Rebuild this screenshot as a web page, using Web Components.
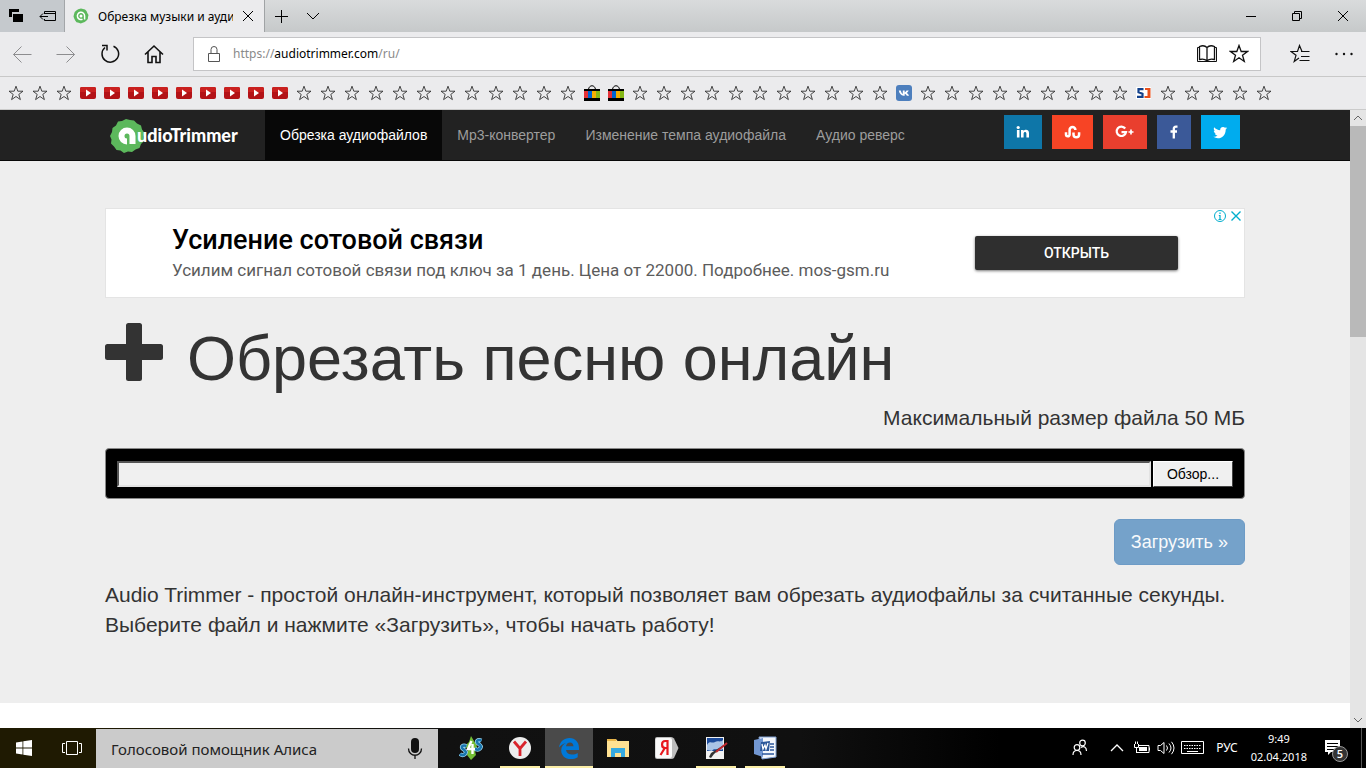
<!DOCTYPE html>
<html lang="ru">
<head>
<meta charset="utf-8">
<meta name="viewport" content="width=device-width, initial-scale=1">
<title>Обрезка музыки и аудиофайлов онлайн</title>
<style>
  body { margin: 0; font-family: "Noto Sans", "Open Sans", sans-serif; font-size: 12px; color: #000; }
</style>
</head>
<body>
<desktop-screen></desktop-screen>
<script>
const define = (name, html, setup) => {
  const tpl = document.createElement('template');
  tpl.innerHTML = html;
  customElements.define(name, class extends HTMLElement {
    connectedCallback() {
      if (this.shadowRoot) return;
      const root = this.attachShadow({ mode: 'open' });
      root.appendChild(tpl.content.cloneNode(true));
      if (setup) setup(root, this);
    }
  });
};

/* Icon set: [width, height, markup] */
const STAR = 'M8 1.2 9.8 6.2H15L10.8 9.4 12.4 14.6 8 11.5 3.6 14.6 5.2 9.4 1 6.2H6.2Z';
const ICONS = {
  tabs: [16, 16, '<path d="M1 1h10v3H4v5H1z" fill="currentColor"/><path d="M5 6h10v8H5z" fill="currentColor"/>'],
  aside: [18, 14, '<g fill="none" stroke="currentColor"><path d="M5.5 5V2.500h11v9h-11V10M5.500 4.500h11M1 7.500h8M4 4.500l-3 3 3 3"/></g>'],
  fav: [16, 16, '<path d="M8 .5l2 .6 2 .4 1.500 1.500.8 2 1.200 2-.5 2-.2 2-1.500 1.700-1.600 1.300-2 .8-2 .7-2-.7-2.200-.6-1.300-1.700L1.200 10.500.5 8.500 1 6.200 1.700 4l1.600-1.500 1.900-1.200z" fill="#5cb85c"/><path d="M9.500 11.200A3.600 3.600 0 1 1 11.600 8v3.500" fill="none" stroke="#fff" stroke-width="1.500"/><circle cx="8" cy="8" r="1.500" fill="#fff"/>'],
  close: [12, 12, '<path d="M1 1l10 10M11 1L1 11" stroke="currentColor" fill="none"/>'],
  plus: [14, 14, '<path d="M7.500 1v13M1 7.500h13" stroke="currentColor" fill="none"/>'],
  down: [14, 8, '<path d="M1 1l6 6 6-6" stroke="currentColor" fill="none"/>'],
  up: [14, 8, '<path d="M1 7l6-6 6 6" stroke="currentColor" fill="none" stroke-width="1.300"/>'],
  min: [12, 12, '<path d="M1 6.500h10" stroke="currentColor"/>'],
  restore: [12, 12, '<path d="M1.500 3.500h7v7h-7zM3.500 3V1.500h7v7H9" stroke="currentColor" fill="none"/>'],
  back: [20, 20, '<path d="M19.500 10.500H1.500M9.500 2.500l-8 8 8 8" stroke="currentColor" fill="none"/>'],
  forward: [20, 20, '<path d="M.5 10.500h18M10.500 2.500l8 8-8 8" stroke="currentColor" fill="none"/>'],
  refresh: [20, 20, '<path d="M13.500 2.200A8.300 8.300 0 1 1 5 3.500" stroke="currentColor" stroke-width="1.500" fill="none"/><path d="M2 1.500h5v5" stroke="currentColor" stroke-width="1.500" fill="none"/>'],
  home: [20, 20, '<path d="M1 10.500l9-8.500 9 8.500M4 8v10.500h4v-6h4v6h4V8" stroke="currentColor" stroke-width="1.600" fill="none"/>'],
  lock: [14, 18, '<path d="M1.500 8.500h11v8h-11zM4 8V4.500a3 3 0 0 1 6 0V8" stroke="currentColor" fill="none"/>'],
  book: [20, 20, '<path d="M10 3.500C8 1.500 5 1.500 2.500 2.500v13C5 14.800 8 15 10 16.800c2-1.800 5-2 7.500-1.300v-13C15 1.500 12 1.500 10 3.500zM10 3.500v13" stroke="currentColor" stroke-width="1.300" fill="none"/><path d="M2 3.500H.5v14h19v-14H18" stroke="currentColor" fill="none"/>'],
  star: [20, 20, '<path d="M10 1.500l2.200 6h6.300l-5 3.800 1.800 6.200-5.300-3.700-5.300 3.700 1.800-6.200-5-3.800h6.300z" stroke="currentColor" stroke-width="1.300" fill="none"/>'],
  hub: [20, 20, '<path d="M12 7.500L9.500 1.500l-2 6h-6.500l5 3.800-1.800 6.200 4.800-3.400M11 7.500h8.500M11 12.500h8.500M9.500 16.500h10" stroke="currentColor" stroke-width="1.200" fill="none"/>'],
  dots: [20, 20, '<g fill="currentColor"><circle cx="2.500" cy="10" r="1.200"/><circle cx="10" cy="10" r="1.200"/><circle cx="17.500" cy="10" r="1.200"/></g>'],
  bstar: [16, 16, `<path d="${STAR}" fill="none" stroke="currentColor" stroke-width=".9"/>`],
  tube: [16, 12, '<rect width="16" height="12" rx="2" fill="#b31217"/><path d="M1.500 0h13a1.500 1.500 0 0 1 1.500 1.500V5H0V1.500A1.500 1.500 0 0 1 1.500 0z" fill="#c9201f"/><path d="M6 2.500l5 3.500-5 3.500z" fill="#fff"/>'],
  bag: [16, 16, '<path d="M4.500 4.500C5-.500 11-.500 11.500 4.500" fill="none" stroke="#000"/><path d="M0 4h16v12H0z" fill="#000"/><path d="M0 6h4v7H0z" fill="#e53238"/><path d="M4 6h4v7H4z" fill="#0064d2"/><path d="M8 6h4v7H8z" fill="#f5af02"/><path d="M12 6h4v7h-4z" fill="#86b817"/>'],
  vk: [16, 16, '<rect width="16" height="16" rx="3" fill="#4d7fbd"/><path d="M2.800 5.500h2C5.200 7.200 6 8.500 6.800 9V5.500h1.900v2C9.500 7 10.200 6 10.500 5.500h2.200C12.300 6.700 11.300 7.600 10.800 8c.8.500 1.700 1.400 2.200 2.700h-2.200C10.400 9.900 9.500 9 8.700 8.800v1.900H7.500C5 10.500 3.200 8.400 2.800 5.500z" fill="#fff"/>'],
  sj: [16, 16, '<path d="M0 2h15v12H0z" fill="#fff"/><path d="M7.500 4.200H2.500v3l4 1.600v3H1" fill="none" stroke="#12418c" stroke-width="2.200"/><path d="M9 3h5.500v10H8.500v-2h3V5H9z" fill="#e8501c"/>'],
  cross: [64, 64, '<path d="M23.500 1h11q2.500 0 2.500 2.500V22h18.500q2.500 0 2.500 2.500v11q0 2.500-2.500 2.500H37v18.500q0 2.500-2.500 2.500h-11q-2.500 0-2.500-2.500V38H2.500Q0 38 0 35.500v-11Q0 22 2.500 22H21V3.500Q21 1 23.500 1z" fill="currentColor"/>'],
  linkedin: [14, 14, '<g fill="currentColor"><circle cx="2.200" cy="2.500" r="1.600"/><path d="M.9 5h2.600v7.500H.9zM5 5h2.500v1.100C8.800 4.200 13 4.200 13 8v4.500h-2.600V8.500c0-2.200-2.800-2-2.800 0v4H5z"/></g>'],
  stumble: [17, 14, '<path d="M2 7.200v2.300a1.800 1.800 0 0 0 3.600 0V5a2.900 2.900 0 0 1 5.800 0M9.500 7.500v2a2.800 2.800 0 0 0 5.600 0V7.200" fill="none" stroke="currentColor" stroke-width="2.500"/>'],
  gplus: [20, 14, '<path d="M10.200 3.500A4.700 4.700 0 1 0 11 7.200H6.500" fill="none" stroke="currentColor" stroke-width="2.200"/><path d="M16 4.500v5M13.500 7h5" stroke="currentColor" stroke-width="1.700"/>'],
  facebook: [10, 14, '<path d="M8.500 1.600H7C5.300 1.600 4.800 2.500 4.800 4v9.500M1.500 6.500h6.500" fill="none" stroke="currentColor" stroke-width="2.300"/>'],
  twitter: [15, 14, '<path d="M14.200 3c-.5.300-1 .4-1.600.5.600-.4 1-.9 1.200-1.500-.5.300-1.100.5-1.800.7A2.900 2.900 0 0 0 7.200 5.300C4.800 5.200 2.700 4 1.200 2.300c-.8 1.400-.3 3 .9 3.900-.5 0-.9-.2-1.300-.4 0 1.400 1 2.500 2.300 2.800-.4.100-.9.100-1.300 0 .4 1.200 1.400 2 2.700 2-1.200.9-2.700 1.400-4.200 1.200 5.700 3.600 12.500-.1 12.400-7.300.6-.4 1.100-.9 1.500-1.500z" fill="currentColor"/>'],
  info: [14, 14, '<circle cx="7" cy="7" r="5.500" fill="none" stroke="currentColor"/><path d="M7 6v4.500M7 3.500V5M5.800 6.500H7M5.500 10.500h3" stroke="currentColor" stroke-width="1.200"/>'],
  adclose: [12, 14, '<path d="M1.500 2.500l9 9M10.500 2.500l-9 9" stroke="currentColor" stroke-width="1.400"/>'],
  win: [16, 16, '<path d="M0 2.500l6.500-1V7.500H0zM7.300 1.300L16 0v7.500H7.300zM0 8.400h6.500v6L0 13.500zM7.300 8.400H16V16l-8.700-1.300z" fill="currentColor"/>'],
  task: [20, 16, '<path d="M4.500 1.500h11v13h-11zM3 3.500H.5v9H3M17 3.500h2.500v9H17" fill="none" stroke="currentColor"/>'],
  mic: [16, 22, '<rect x="4" y="0" width="8" height="15" rx="4" fill="currentColor"/><path d="M1.500 10.500c0 9 13 9 13 0M8 17.500V21" fill="none" stroke="currentColor" stroke-width="1.300"/>'],
  s4s: [24, 24, '<path d="M12 0l3 5 3 5-2 5 1 4-5 5-4-5 1-5-3-4 4-4z" fill="#73bd35"/><g fill="none"><path d="M7.500 10c-4-1.500-6 1-3.500 3s4 3 2 5-4 1-5 0M22.500 4.500c-4-1.500-6 1-3.500 3s4 3 2 5-4 1-5 0" stroke="#9edaf5" stroke-width="4"/><path d="M7.500 10c-4-1.500-6 1-3.500 3s4 3 2 5-4 1-5 0M22.500 4.500c-4-1.500-6 1-3.500 3s4 3 2 5-4 1-5 0" stroke="#1976ae" stroke-width="2.500"/><path d="M12.500 5L9 13h7M13.500 8v10" stroke="#fff" stroke-width="2.400"/></g>'],
  ybrowser: [24, 24, '<circle cx="12" cy="12" r="11" fill="#ededed"/><path d="M6 5.500l6 7 6-7M12 12v8" fill="none" stroke="#d9232b" stroke-width="2.800"/>'],
  edge: [24, 24, '<path d="M2 11.500C3 5.500 7 2 12.500 2 18.500 2 22 6.500 22 12v2H9c.4 3 3 4.500 6 4.500 2.200 0 4-.5 5.700-1.600v4.300C18.700 22.500 16.500 23 14 23c-6 0-9.800-3.500-9.800-8.800 0-3.500 2-6 5-7.500C6.500 7.300 4 9 2 11.500zM9 10.200h7.500C16.400 8 15 6.500 13 6.500c-2.200 0-3.600 1.600-4 3.700z" fill="#0078d7" fill-rule="evenodd"/>'],
  folder: [24, 24, '<path d="M1 3h9l1.500 2H23v16H1z" fill="#ffe192"/><path d="M1 3h9v2H1z" fill="#e8b54a"/><path d="M5 21v-9h14v9h-4v-4H9v4z" fill="#35a9e0"/>'],
  yandex: [26, 24, '<path d="M3 1h14q2 0 3 1.500l4.500 9.500L20 22q-1 1-3 1H3q-2 0-2-2V3q0-2 2-2z" fill="#bdbdbd"/><path d="M3 2h13q2 0 2 2v16q0 2-2 2H3q-1.500 0-1.500-2V4Q1.500 2 3 2z" fill="#fafafa"/><path d="M13.500 19V5h-2.300c-4.200 0-4.200 7 0 7h2M10.500 12.500L6.500 19" fill="none" stroke="#e8181d" stroke-width="2.200"/>'],
  paint: [24, 24, '<path d="M2 1h18v22H2z" fill="#f2f2f2"/><path d="M3 2h16v13H3z" fill="#1c4b9b"/><path d="M3 9c3-5 5-1 8-3s5 1 8-2v9c-5 3-8-2-11 2l-5-1z" fill="#a9c4e6"/><path d="M23 7L10 18l-3 4-2-1 2-4z" fill="#333"/><path d="M23 7l-11 9" stroke="#c1272d" stroke-width="2"/>'],
  word: [24, 24, '<path d="M6 1h17v20l-14 2z" fill="#f4f7fc" stroke="#7f9fd0"/><path d="M1 4l9-2v19l-9-3z" fill="#7297d2"/><path d="M8 6l9-1-1 10H7z" fill="#2b579a"/><path d="M9 8l1 5 2-4 1 4 2-6" fill="none" stroke="#fff" stroke-width="1.300"/><path d="M17 8h4M17 11h4M17 14h4M9 18h12" stroke="#2b579a" stroke-width="1.500"/>'],
  people: [16, 18, '<g fill="none" stroke="currentColor" stroke-width="1.200"><circle cx="5" cy="8.500" r="2.800"/><circle cx="10.500" cy="4" r="2.800"/><path d="M1 16c0-6 8-6 8 0M9 8.500c2.500-2 5.500-.5 5.500 3.500"/></g>'],
  battery: [18, 14, '<path d="M1.500 3v3.500h4V3M2.500 3V.5M4.500 3V.5M3.500 7v5M5 4.500h11v7H4M16.500 6.500v3" fill="none" stroke="currentColor"/><path d="M6 6h8v4H6z" fill="currentColor"/>'],
  sound: [18, 14, '<path d="M1 4.500h2.500l3.500-3v11l-3.500-3H1zM9.500 4.500q2 2.500 0 5M12 2.500q4 4.500 0 9M14.500.8q5 6.200 0 12.400" fill="none" stroke="currentColor"/>'],
  keyboard: [24, 14, '<path d="M.5.500h22v12H.5z" fill="none" stroke="currentColor"/><path d="M3 4.500h17M3 7.500h17" stroke="currentColor" stroke-dasharray="1.500 1"/><path d="M6 10.500h11" stroke="currentColor"/>'],
  note: [18, 18, '<path d="M1 1h15v12H7l-3 3v-3H1z" fill="currentColor"/><path d="M3 4.500h11M3 7.500h11M3 10.500h7" stroke="#000"/>'],
  seal: [35, 35, '<path d="M16 1l4 1 4 .5 3 3 4 2 1 4 2.500 3.500-1 4 .5 4-3 3-1.500 4-4 1.500-3.500 2.500-4-.5-4 1.500-3.500-2.500-4-.5-2.500-3.500-3-3 .5-4L0 18l2-4 .5-4 3.500-2.500 2-4 4-.5z" fill="#5cb85c"/><path d="M17 23.500a5.500 5.500 0 1 1 5.500-5.500V26" fill="none" stroke="#fff" stroke-width="6"/>']
};

define('ui-icon', `<style>:host{display:inline-flex;flex:none}span{display:flex}svg{display:block}</style><span></span>`, (root, el) => {
  const [w, h, body] = ICONS[el.getAttribute('name')];
  root.querySelector('span').innerHTML = `<svg aria-hidden="true" width="${w}" height="${h}" viewBox="0 0 ${w} ${h}">${body}</svg>`;
});

define('tab-strip', `
<style>
  :host { display: flex; height: 32px; background: linear-gradient(#d9dbdc, #c6c9ca); }
  button { border: 0; background: none; padding: 0; color: inherit; display: flex; align-items: center; justify-content: center; }
  .tools { display: flex; width: 64px; border-right: 1px solid #a3a6a9; background: #c5c9cd; }
  .tools button { flex: 1; }
  .tab { display: flex; align-items: center; gap: 9px; width: 200px; box-sizing: border-box; padding: 0 10px 0 8px; background: #ebebed; border-right: 1px solid #a0a3a5; }
  .title { flex: 1; overflow: hidden; white-space: nowrap; }
  .add, .more { width: 32px; }
  .space { flex: 1; }
  .win { width: 46px; }
</style>
<div class="tools"><button aria-label="Отложенные вкладки"><ui-icon name="tabs"></ui-icon></button><button aria-label="Отложить вкладки"><ui-icon name="aside"></ui-icon></button></div>
<div class="tab"><ui-icon name="fav"></ui-icon><span class="title">Обрезка музыки и аудио</span><button aria-label="Закрыть вкладку"><ui-icon name="close"></ui-icon></button></div>
<button class="add" aria-label="Новая вкладка"><ui-icon name="plus"></ui-icon></button>
<button class="more" aria-label="Список вкладок"><ui-icon name="down"></ui-icon></button>
<span class="space"></span>
<button class="win" aria-label="Свернуть"><ui-icon name="min"></ui-icon></button>
<button class="win" aria-label="Восстановить"><ui-icon name="restore"></ui-icon></button>
<button class="win" aria-label="Закрыть"><ui-icon name="close"></ui-icon></button>`);

define('address-bar', `
<style>
  :host { display: flex; align-items: center; height: 44px; background: #ebebed; border-bottom: 1px solid #c8c8c8; }
  button { border: 0; background: none; padding: 0; width: 44px; height: 34px; color: #111; display: flex; align-items: center; justify-content: center; }
  .off { color: #8d8d8f; }
  .box { flex: 1; display: flex; align-items: center; height: 32px; margin: 0 17px; border: 1px solid #c4c4c6; background: #fff; padding: 0 5px 0 13px; }
  .box button { width: 32px; }
  .box ui-icon { color: #555; }
  .box button ui-icon { color: #111; }
  .url { flex: 1; margin-left: 12px; font-size: 12px; line-height: 20px; color: #000; outline: 0; }
  .url span { color: #8a8a8a; }
</style>
<button class="off" aria-label="Назад"><ui-icon name="back"></ui-icon></button>
<button class="off" aria-label="Вперёд"><ui-icon name="forward"></ui-icon></button>
<button aria-label="Обновить"><ui-icon name="refresh"></ui-icon></button>
<button aria-label="Домой"><ui-icon name="home"></ui-icon></button>
<div class="box"><ui-icon name="lock"></ui-icon>
<div class="url" role="textbox" aria-label="Адрес" contenteditable="true" spellcheck="false"><span>https://</span>audiotrimmer.com<span>/ru/</span></div>
<button aria-label="Режим чтения"><ui-icon name="book"></ui-icon></button><button aria-label="В избранное"><ui-icon name="star"></ui-icon></button></div>
<button aria-label="Центр"><ui-icon name="hub"></ui-icon></button>
<button aria-label="Ещё"><ui-icon name="dots"></ui-icon></button>`);

define('favorites-bar', `
<style>
  :host { display: flex; align-items: center; gap: 8px; height: 32px; padding: 0 8px; overflow: hidden; background: #ebebed; border-bottom: 1px solid #cbcbcb; }
  a { display: flex; width: 16px; flex: none; color: #333; }
</style>`, root => {
  const special = { 24: 'bag', 25: 'bag', 37: 'vk', 47: 'sj' };
  for (let i = 0; i < 53; i++) {
    const name = special[i] || (i > 2 && i < 12 ? 'tube' : 'bstar');
    const a = document.createElement('a');
    a.href = '#';
    a.setAttribute('aria-label', 'Закладка');
    a.innerHTML = `<ui-icon name="${name}"></ui-icon>`;
    root.appendChild(a);
  }
});

define('scroll-bar', `
<style>
  :host { display: flex; flex-direction: column; width: 16px; flex: none; background: #e5e5e5; color: #666; }
  .arrow { height: 16px; display: flex; align-items: center; justify-content: center; }
  svg { display: block; }
  .track { flex: 1; }
  .thumb { height: 36%; background: #b9b9b9; }
</style>
<div class="arrow"><svg width="10" height="6"><path d="M1 5l4-4 4 4" fill="none" stroke="currentColor"/></svg></div>
<div class="track"><div class="thumb"></div></div>
<div class="arrow"><svg width="10" height="6"><path d="M1 1l4 4 4-4" fill="none" stroke="currentColor"/></svg></div>`);

define('share-link', `
<style>
  :host { display: block; }
  a { display: flex; align-items: center; height: 34px; padding: 0 12px; color: #fff; background: var(--tone); }
</style><a href="#"><slot></slot></a>`, (root, el) => root.querySelector('a').setAttribute('aria-label', el.getAttribute('label')));

define('site-header', `
<style>
  :host { display: block; background: #222; border-bottom: 1px solid #080808; font-family: "Liberation Sans", Arial, sans-serif; font-size: 14px; }
  .row { display: flex; max-width: 1140px; height: 50px; margin: 0 auto; }
  .logo { display: flex; align-items: center; width: 160px; box-sizing: border-box; padding-left: 5px; color: #fff; text-decoration: none; font: 900 18px/24px Lato, sans-serif; }
  .logo ui-icon { margin-right: -8px; }
  .logo span { position: relative; }
  nav { display: flex; flex: 1; }
  nav a { padding: 15px; line-height: 20px; color: #9d9d9d; text-decoration: none; white-space: nowrap; }
  nav a.on { background: #080808; color: #fff; }
  .share { display: flex; gap: 10px; padding: 5px 5px 0 0; }
</style>
<div class="row">
  <a class="logo" href="#" aria-label="AudioTrimmer"><ui-icon name="seal"></ui-icon><span>udioTrimmer</span></a>
  <nav><a class="on" href="#">Обрезка аудиофайлов</a><a href="#">Mp3-конвертер</a><a href="#">Изменение темпа аудиофайла</a><a href="#">Аудио реверс</a></nav>
  <div class="share">
    <share-link label="LinkedIn" style="--tone:#0e76a8"><ui-icon name="linkedin"></ui-icon></share-link>
    <share-link label="StumbleUpon" style="--tone:#f74425"><ui-icon name="stumble"></ui-icon></share-link>
    <share-link label="Google+" style="--tone:#e93f2e"><ui-icon name="gplus"></ui-icon></share-link>
    <share-link label="Facebook" style="--tone:#3b5998"><ui-icon name="facebook"></ui-icon></share-link>
    <share-link label="Twitter" style="--tone:#00acee"><ui-icon name="twitter"></ui-icon></share-link>
  </div>
</div>`);

define('ad-banner', `
<style>
  :host { display: flex; align-items: center; position: relative; height: 88px; background: #fff; border: 1px solid #e4e4e4; padding: 0 66px; font-family: Roboto, sans-serif; }
  .copy { flex: 1; }
  h2 { margin: 0; font-size: 27px; line-height: 34px; font-weight: 500; color: #000; }
  p { margin: 0; font-size: 17px; line-height: 26px; color: #5c5c5c; }
  .go { width: 203px; height: 34px; border: 0; border-radius: 2px; background: #2f2f2f; color: #fff; font: 500 14px/20px Roboto, sans-serif; box-shadow: 0 1px 3px #0008; }
  .marks { position: absolute; top: 0; right: 2px; display: flex; gap: 3px; color: #00aecd; }
  .marks button { border: 0; background: none; padding: 0; color: inherit; display: flex; }
</style>
<div class="copy"><h2>Усиление сотовой связи</h2><p>Усилим сигнал сотовой связи под ключ за 1 день. Цена от 22000. Подробнее. mos-gsm.ru</p></div>
<button class="go">ОТКРЫТЬ</button>
<div class="marks"><button aria-label="О рекламе"><ui-icon name="info"></ui-icon></button><button aria-label="Закрыть рекламу"><ui-icon name="adclose"></ui-icon></button></div>`);

define('upload-form', `
<style>
  :host { display: block; }
  form { display: flex; flex-direction: column; align-items: flex-end; }
  .limit { margin: 9px 0 15px; line-height: 30px; }
  .picker { display: flex; gap: 2px; align-self: stretch; box-sizing: border-box; height: 51px; padding: 12px 11px 11px; border: 1px solid #888; border-radius: 4px; background: #000; }
  input { flex: 1; min-width: 0; box-sizing: border-box; border: 2px solid; border-color: #555 #e3e3e3 #e3e3e3 #555; background: #f0f0f0; padding: 0 4px; }
  .browse { width: 80px; border: 1px solid; border-color: #fff #444 #444 #fff; background: #f0f0f0; color: #000; padding: 0; font: 14px/20px "Liberation Sans", Arial, sans-serif; }
  .send { margin-top: 20px; height: 46px; padding: 0 16px; border: 1px solid #6d9bc6; border-radius: 6px; background: #75a2ca; color: #f8fafc; font: 18px/24px "Liberation Sans", Arial, sans-serif; }
</style>
<form onsubmit="return false">
  <label class="limit" for="file">Максимальный размер файла 50 МБ</label>
  <div class="picker"><input id="file" type="text" readonly><button type="button" class="browse">Обзор...</button></div>
  <button class="send">Загрузить »</button>
</form>`);

define('hero-section', `
<style>
  :host { display: block; background: #eee; color: #333; font-family: "Liberation Sans", Arial, sans-serif; font-size: 21px; padding: 47px 0 63px; }
  main { max-width: 1140px; margin: 0 auto; }
  h1 { display: flex; gap: 18px; margin: 24px 0 0; font-size: 63px; line-height: 72px; font-weight: 400; }
  p { margin: 15px 0 0; line-height: 30px; }
</style>
<main>
  <ad-banner></ad-banner>
  <h1><ui-icon name="cross"></ui-icon><span>Обрезать песню онлайн</span></h1>
  <upload-form></upload-form>
  <p>Audio Trimmer - простой онлайн-инструмент, который позволяет вам обрезать аудиофайлы за считанные секунды. Выберите файл и нажмите «Загрузить», чтобы начать работу!</p>
</main>`);

define('task-app', `
<style>
  :host { display: block; width: 49px; }
  button { position: relative; display: flex; align-items: center; justify-content: center; width: 48px; height: 40px; border: 0; padding: 0; background: none; }
  :host([running]) button { background: linear-gradient(#fbeea6, #fbeea6) center bottom / 40px 2px no-repeat; }
  :host([active]) button { background: linear-gradient(#fbeea6, #fbeea6) center bottom / 48px 2px no-repeat #4a4a4a; }
</style><button><slot></slot></button>`, (root, el) => root.querySelector('button').setAttribute('aria-label', el.getAttribute('label')));

define('task-bar', `
<style>
  :host { display: flex; height: 40px; background: linear-gradient(90deg, #1f1a02 0, #1f1a02 96px, #111 440px, #101010 800px, #000 1000px); color: #fff; }
  button { border: 0; background: none; padding: 0; color: inherit; display: flex; align-items: center; justify-content: center; }
  .sys { width: 48px; }
  .search { display: flex; align-items: center; width: 342px; box-sizing: border-box; margin-top: 1px; padding: 0 15px; background: #cbcbcb; color: #111; }
  .search input { flex: 1; min-width: 0; border: 0; padding: 0; background: none; outline: 0; font: 15px/20px "Noto Sans", "Open Sans", sans-serif; color: #222; }
  .search input::placeholder { color: #222; opacity: 1; }
  .apps { display: flex; flex: 1; padding-left: 9px; }
  .tray { display: flex; align-items: center; }
  .tray .people { width: 30px; margin-right: 14px; }
  .tray .up { width: 16px; margin-right: 8px; }
  .tray .ic { margin-right: 6px; }
  .lang { margin: 0 13px 0 5px; line-height: 16px; }
  .clock { text-align: center; font-size: 11px; line-height: 18px; }
  .note { position: relative; width: 36px; height: 40px; margin-left: 8px; }
  .badge { position: absolute; left: 17px; top: 18px; width: 14px; height: 14px; border: 1px solid #999; border-radius: 50%; background: #333; font: 600 11px/14px "Open Sans", sans-serif; color: #fff; text-align: center; }
  .desk { align-self: stretch; width: 4px; margin-left: 10px; border-left: 1px solid #555; }
</style>
<button class="sys" aria-label="Пуск"><ui-icon name="win"></ui-icon></button>
<button class="sys" aria-label="Представление задач"><ui-icon name="task"></ui-icon></button>
<div class="search"><input type="text" aria-label="Поиск" placeholder="Голосовой помощник Алиса"><button aria-label="Голосовой ввод"><ui-icon name="mic"></ui-icon></button></div>
<div class="apps">
  <task-app label="S4S"><ui-icon name="s4s"></ui-icon></task-app>
  <task-app label="Яндекс.Браузер" running><ui-icon name="ybrowser"></ui-icon></task-app>
  <task-app label="Edge" active><ui-icon name="edge"></ui-icon></task-app>
  <task-app label="Проводник"><ui-icon name="folder"></ui-icon></task-app>
  <task-app label="Яндекс"><ui-icon name="yandex"></ui-icon></task-app>
  <task-app label="Рисунок" running><ui-icon name="paint"></ui-icon></task-app>
  <task-app label="Word" running><ui-icon name="word"></ui-icon></task-app>
</div>
<div class="tray">
  <button class="people" aria-label="Люди"><ui-icon name="people"></ui-icon></button>
  <button class="up" aria-label="Скрытые значки"><ui-icon name="up"></ui-icon></button>
  <ui-icon class="ic" name="battery"></ui-icon><ui-icon class="ic" name="sound"></ui-icon><ui-icon class="ic" name="keyboard"></ui-icon>
  <span class="lang">РУС</span>
  <div class="clock">9:49<br>02.04.2018</div>
  <button class="note" aria-label="Уведомления"><ui-icon name="note"></ui-icon><span class="badge">5</span></button>
  <span class="desk"></span>
</div>`);

define('desktop-screen', `
<style>
  :host { display: flex; flex-direction: column; height: 100vh; overflow: hidden; background: #fff; }
  tab-strip, address-bar, favorites-bar, task-bar { flex: none; }
  .view { flex: 1; min-height: 0; display: flex; }
  .page { flex: 1; min-width: 0; overflow: hidden; }
</style>
<tab-strip></tab-strip><address-bar></address-bar><favorites-bar></favorites-bar>
<div class="view"><div class="page"><site-header></site-header><hero-section></hero-section></div><scroll-bar></scroll-bar></div>
<task-bar></task-bar>`);
</script>
</body>
</html>
